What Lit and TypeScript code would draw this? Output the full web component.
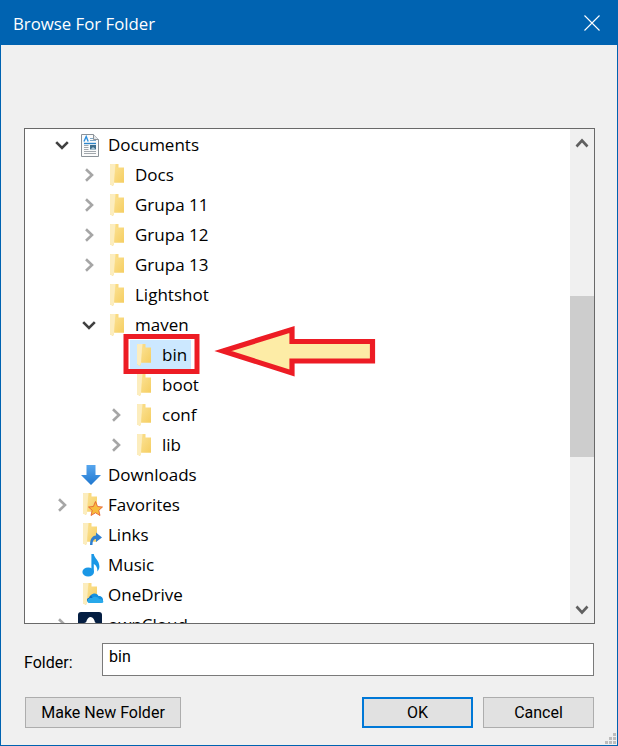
import { LitElement, html, css, svg } from "lit";
import { customElement } from "lit/decorators.js";

type Row = { label: string; depth: number; chevron?: "open" | "closed"; icon: string; selected?: boolean };

const ROWS: Row[] = [
  { label: "Documents", depth: 1, chevron: "open", icon: "doc" },
  { label: "Docs", depth: 2, chevron: "closed", icon: "folder" },
  { label: "Grupa 11", depth: 2, chevron: "closed", icon: "folder" },
  { label: "Grupa 12", depth: 2, chevron: "closed", icon: "folder" },
  { label: "Grupa 13", depth: 2, chevron: "closed", icon: "folder" },
  { label: "Lightshot", depth: 2, icon: "folder" },
  { label: "maven", depth: 2, chevron: "open", icon: "folder" },
  { label: "bin", depth: 3, icon: "folder", selected: true },
  { label: "boot", depth: 3, icon: "folder" },
  { label: "conf", depth: 3, chevron: "closed", icon: "folder" },
  { label: "lib", depth: 3, chevron: "closed", icon: "folder" },
  { label: "Downloads", depth: 1, icon: "download" },
  { label: "Favorites", depth: 1, chevron: "closed", icon: "favorites" },
  { label: "Links", depth: 1, icon: "links" },
  { label: "Music", depth: 1, icon: "music" },
  { label: "OneDrive", depth: 1, icon: "onedrive" },
  { label: "ownCloud", depth: 1, chevron: "closed", icon: "owncloud" },
];

const folderShape = svg`
  <path d="M1 0H8.5V4H13.4Q14 4 14 4.6V18.5H4.2L3 22L0.4 20.6Q0 20.4 0 20V1Q0 0 1 0Z" fill="url(#fb)"/>
  <path d="M0 1Q0 0 1 0H5.5L4.4 18.5L3 22L0.4 20.6Q0 20.4 0 20Z" fill="#FCEDBE"/>
  <path d="M5 3.5H14V18.5H4.3Z" fill="url(#fb)"/>
`;

const folderDefs = svg`
  <defs>
    <linearGradient id="fb" x1="0" y1="0" x2="1" y2="1">
      <stop offset="0" stop-color="#FBE08F"/>
      <stop offset="1" stop-color="#F5CE62"/>
    </linearGradient>
  </defs>
`;

function icon(name: string) {
  switch (name) {
    case "folder":
      return html`<svg class="ic" width="14" height="22" viewBox="0 0 14 22">${folderDefs}${folderShape}</svg>`;
    case "doc":
      return html`<svg class="ic" width="18" height="23" viewBox="0 0 18 23">
        <path d="M.5.5H12.5L17.5 5.5V22.5H.5Z" fill="#FBFBFB" stroke="#8B9298"/>
        <path d="M12.5.5V5.5H17.5" fill="#E4E7EA" stroke="#8B9298"/>
        <path d="M3 7.5L5.2 2.5L7.2 7.5" fill="none" stroke="#2D8FDD" stroke-width="1.4"/>
        <path d="M9 4.5H12M9 6.5H15" stroke="#7FA9C9"/>
        <path d="M3 9.5H15" stroke="#2E86C9" stroke-width="1.4"/>
        <rect x="9" y="11" width="6" height="4.5" fill="#3F6E8C"/>
        <path d="M9.5 15.5L12 13L15 15.5Z" fill="#A9C7D8"/>
        <path d="M3 11.5H7.5M3 13.5H7.5M3 15.5H7.5M3 17.5H15M3 19.5H15" stroke="#A2A8AD"/>
      </svg>`;
    case "download":
      return html`<svg class="ic nudge" width="20" height="20" viewBox="0 0 20 20">
        <defs><linearGradient id="dl" x1="0" y1="0" x2="0" y2="1">
          <stop offset="0" stop-color="#57A6EE"/><stop offset="1" stop-color="#1F77CF"/>
        </linearGradient></defs>
        <path d="M5.5 0H14.5V10H20L10 20L0 10H5.5Z" fill="url(#dl)"/>
      </svg>`;
    case "favorites":
      return html`<svg class="ic over" width="20" height="24" viewBox="0 0 20 24">${folderDefs}${folderShape}
        <path d="M12.5 8.5L14.6 13.5L19.5 14L15.8 17.3L17 22.5L12.5 19.8L8 22.5L9.2 17.3L5.5 14L10.4 13.5Z" fill="#F8BC3C" stroke="#E2562B" stroke-width=".8"/>
      </svg>`;
    case "links":
      return html`<svg class="ic over" width="20" height="24" viewBox="0 0 20 24">${folderDefs}${folderShape}
        <path d="M7 22C7 16 9 13 13 12.5V9.5L19 14.5L13 19V16C10.5 16 9.5 18.5 9.5 22Z" fill="#2F7FD0"/>
      </svg>`;
    case "music":
      return html`<svg class="ic nudge" width="18" height="23" viewBox="0 0 18 23">
        <ellipse cx="6.2" cy="18" rx="5.8" ry="4.6" fill="#1A97E6"/>
        <path d="M9.4 0H11.8C12.2 4 17.4 6.5 17.4 12.5C17.4 14.5 16.6 16.2 15.3 17.4C15.8 13.8 13.8 11 11.8 10V18H9.4Z" fill="#1A97E6"/>
      </svg>`;
    case "onedrive":
      return html`<svg class="ic over" width="21" height="24" viewBox="0 0 21 24">${folderDefs}${folderShape}
        <path d="M5 18.5C3.5 18.5 3.5 15 6 14.8C7 11 12 10 14.2 13.2Z" fill="#0F6CBD"/>
        <path d="M8 12.5C10 9.5 14.5 10 15.5 13C18.5 12.6 20.5 15 20 18.5H12Z" fill="#1490DF"/>
        <path d="M4.5 18.7C3.8 16 6.5 14.5 9 15C11 13 15 13.5 16 16C18 15.8 20 16.5 20.4 18.7Q20.4 20 18.5 20H6Q4.8 20 4.5 18.7Z" fill="#28A8EA"/>
      </svg>`;
    case "owncloud":
      return html`<svg class="ic" width="24" height="26" viewBox="0 0 24 26">
        <rect width="24" height="26" rx="3" fill="#041E42"/>
        <path d="M4.5 16C4 12 6.5 10.5 8 10.5C9 6.5 11 5 12.5 5C15 5 16.5 7.5 17 10.5C19 10.5 20 13 19.5 16Z" fill="#fff"/>
      </svg>`;
  }
  return null;
}

function chevron(kind?: "open" | "closed") {
  if (kind === "open")
    return html`<svg width="18" height="18" viewBox="0 0 18 18"><path d="M3.2 6.2L9 12L14.8 6.2" fill="none" stroke="#404040" stroke-width="2.6"/></svg>`;
  if (kind === "closed")
    return html`<svg width="18" height="18" viewBox="0 0 18 18"><path d="M6 3.2L12 9L6 14.8" fill="none" stroke="#A6A6A6" stroke-width="2.6"/></svg>`;
  return null;
}

@customElement("app-root")
export class AppRoot extends LitElement {
  static styles = css`
    :host {
      display: block;
      position: relative;
      width: 618px;
      height: 746px;
      overflow: hidden;
      font-family: "Open Sans", "Noto Sans", sans-serif;
      color: #000;
    }
    .window {
      box-sizing: border-box;
      width: 618px;
      height: 746px;
      display: flex;
      flex-direction: column;
      background: #f0f0f0;
      border: 1px solid #0063b1;
      border-top: 0;
    }
    .titlebar {
      height: 45px;
      flex: none;
      margin: 0 -1px;
      background: #0063b1;
      color: #fff;
      display: flex;
      align-items: center;
      justify-content: space-between;
      padding: 0 18px 0 13px;
      font-size: 17px;
      box-sizing: border-box;
    }
    .titlebar span { margin-top: 2px; font-size: 16.8px; }
    .close { display: block; }
    .box {
      margin: 83px 22px 0 23px;
      height: 496px;
      flex: none;
      box-sizing: border-box;
      border: 1px solid #696969;
      background: #fff;
      display: flex;
      overflow: hidden;
    }
    .tree { flex: 1; min-width: 0; padding-top: 1px; padding-left: 1px; overflow: hidden; }
    .row { height: 30px; display: flex; align-items: center; font-size: 17px; white-space: nowrap; }
    .chev { width: 18px; height: 18px; flex: none; }
    .chev svg { display: block; }
    .item {
      display: flex;
      align-items: center;
      height: 30px;
      margin-left: 5px;
      padding: 0 4px 0 4px;
    }
    .item.sel { background: #cce8ff; }
    .slot { width: 20px; height: 30px; flex: none; display: flex; align-items: center; justify-content: center; position: relative; }
    .ic { display: block; flex: none; }
    .ic.over { margin-left: 6px; }
    .ic.nudge { margin-left: 1px; }
    .label { margin-left: 8px; margin-top: -1px; }
    .scroll { width: 24px; flex: none; background: #f0f0f0; display: flex; flex-direction: column; }
    .arrow { height: 27px; flex: none; display: flex; align-items: center; justify-content: center; }
    .thumb { width: 24px; height: 161px; margin-top: 140px; background: #cdcdcd; flex: none; }
    .gap { flex: 1; }
    .form { display: flex; align-items: flex-start; margin: 19px 23px 0 23px; font-family: Roboto, "Open Sans", sans-serif; }
    .form label { width: 78px; flex: none; font-size: 16px; margin-top: 7px; line-height: 26px; }
    .input {
      flex: 1;
      height: 33px;
      box-sizing: border-box;
      border: 1px solid #7a7a7a;
      background: #fff;
      padding: 0 6px;
      font-size: 16px;
      line-height: 25px;
    }
    .buttons { display: flex; margin: 21px 23px 0 24px; gap: 10px; }
    button {
      font-family: Roboto, "Open Sans", sans-serif;
      font-size: 16px;
      height: 31px;
      box-sizing: border-box;
      padding: 0;
      border: 1px solid #adadad;
      background: #e1e1e1;
      color: #000;
      width: 111px;
    }
    .make { width: 156px; margin-right: auto; }
    .default { border: 2px solid #0078d7; }
    .grip { position: absolute; right: 1px; bottom: 1px; display: block; }
    .annot { position: absolute; left: 0; top: 0; pointer-events: none; }
  `;

  render() {
    return html`
      <div class="window">
        <div class="titlebar">
          <span>Browse For Folder</span>
          <svg class="close" width="16" height="16" viewBox="0 0 16 16"><path d="M.5.5L15.5 15.5M15.5.5L.5 15.5" stroke="#fff" stroke-width="1.1" fill="none"/></svg>
        </div>
        <div class="box">
          <div class="tree">
            ${ROWS.map(
              (r) => html`<div class="row" style="padding-left:${r.depth * 27}px">
                <span class="chev">${chevron(r.chevron)}</span>
                <span class="item ${r.selected ? "sel" : ""}">
                  <span class="slot">${icon(r.icon)}</span>
                  <span class="label">${r.label}</span>
                </span>
              </div>`
            )}
          </div>
          <div class="scroll">
            <div class="arrow"><svg width="14" height="10" viewBox="0 0 14 10"><path d="M1.5 8.5L7 2.5L12.5 8.5" fill="none" stroke="#606060" stroke-width="2.6"/></svg></div>
            <div class="thumb"></div>
            <div class="gap"></div>
            <div class="arrow"><svg width="14" height="10" viewBox="0 0 14 10"><path d="M1.5 1.5L7 7.5L12.5 1.5" fill="none" stroke="#606060" stroke-width="2.6"/></svg></div>
          </div>
        </div>
        <div class="form">
          <label>Folder:</label>
          <div class="input">bin</div>
        </div>
        <div class="buttons">
          <button class="make">Make New Folder</button>
          <button class="default">OK</button>
          <button>Cancel</button>
        </div>
      </div>
      <svg class="grip" width="12" height="12" viewBox="0 0 12 12" fill="#bdbdbd">
        <rect x="8" y="0" width="3" height="3"/><rect x="4" y="4" width="3" height="3"/><rect x="8" y="4" width="3" height="3"/>
        <rect x="0" y="8" width="3" height="3"/><rect x="4" y="8" width="3" height="3"/><rect x="8" y="8" width="3" height="3"/>
      </svg>
      <svg class="annot" width="618" height="746" viewBox="0 0 618 746">
        <rect x="126" y="336.5" width="71" height="35" fill="none" stroke="#ed1c24" stroke-width="5"/>
        <path d="M372.5 341.5V361H292V373L223 351L292 329.5V341.5Z" fill="#fdeca6" stroke="#ed1c24" stroke-width="5.2" stroke-miterlimit="10"/>
      </svg>
    `;
  }
}
